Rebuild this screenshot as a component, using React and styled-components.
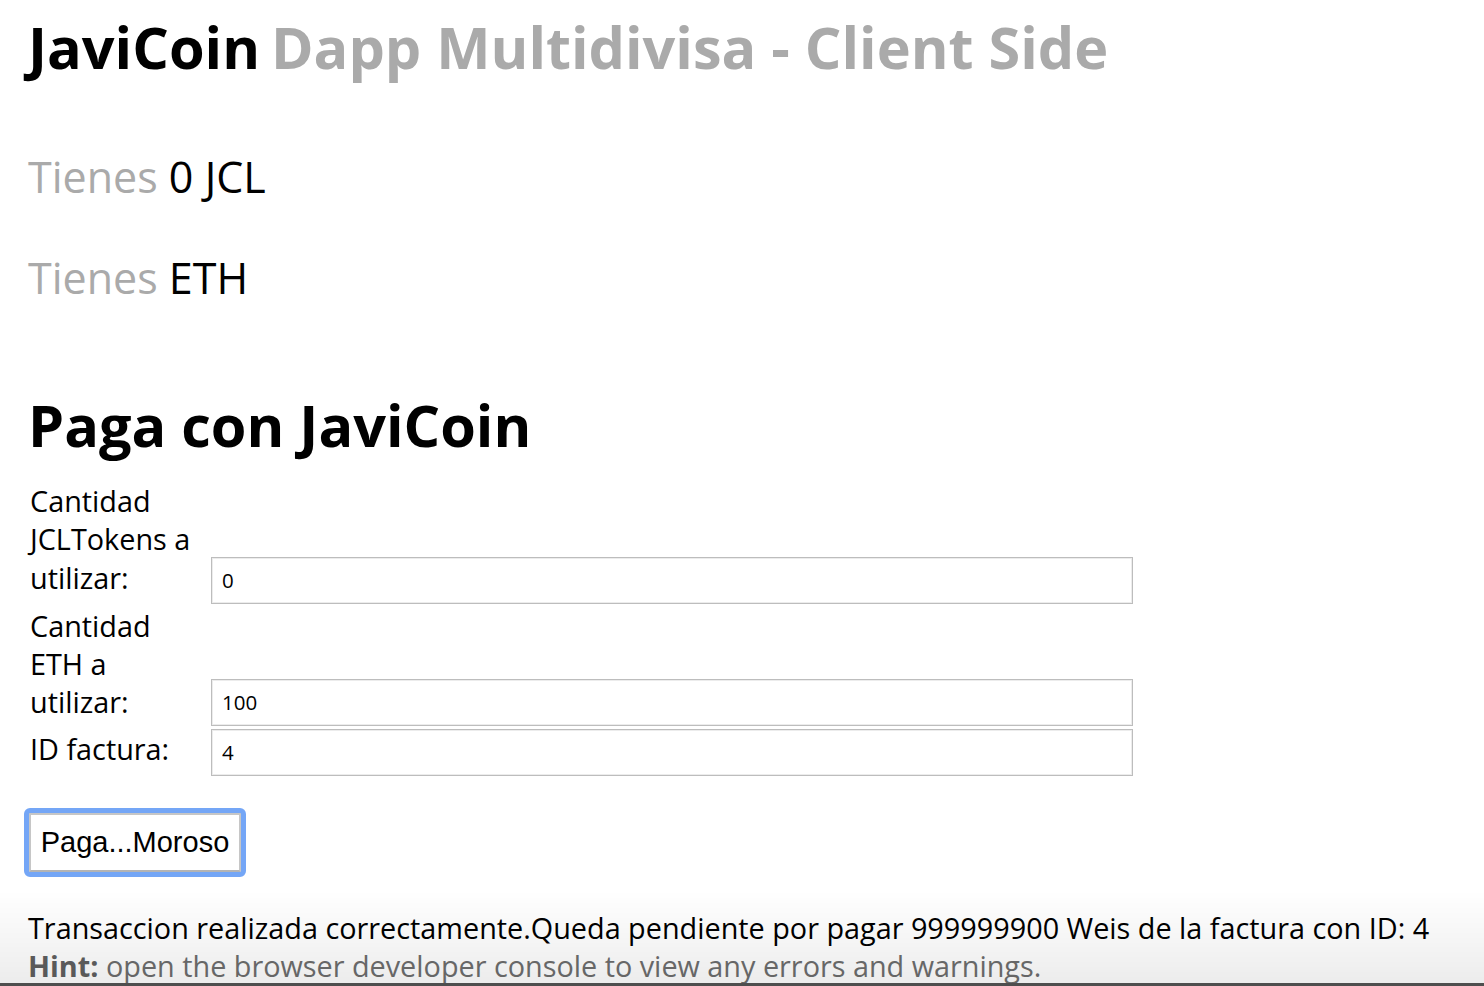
import React from "react";
import styled, { createGlobalStyle } from "styled-components";

const Global = createGlobalStyle`
  html, body { margin: 0; padding: 0; background: #fff; }
  body { font-family: "Open Sans", "DejaVu Sans", sans-serif; color: #000; }
`;

const Page = styled.main`
  display: flex;
  flex-direction: column;
  align-items: flex-start;
  padding: 9px 0 0 28px;
`;

const Title = styled.h1`
  margin: 0;
  font-size: 57.6px;
  line-height: 76px;
  font-weight: 700;
  white-space: nowrap;
`;

const Muted = styled.span`
  color: #aaaaaa;
`;

const TitleMuted = styled(Muted)`
  margin-left: 11px;
`;

const Balance = styled.h3`
  margin: ${(p) => p.$top}px 0 0 0;
  font-size: 43px;
  line-height: 58px;
  font-weight: 400;
`;

const Section = styled.h1`
  margin: 80px 0 0 0;
  font-size: 57.6px;
  line-height: 76px;
  font-weight: 700;
`;

const Form = styled.div`
  margin-top: 19px;
  display: grid;
  grid-template-columns: 172px 922px;
  column-gap: 11px;
  row-gap: 3px;
  align-items: end;
`;

const Label = styled.label`
  font-size: 28.8px;
  line-height: 38.3px;
  padding: 0 0 ${(p) => p.$bottom ?? 7}px 2px;
`;

const Input = styled.input`
  box-sizing: border-box;
  width: 922px;
  height: 47px;
  border: 1px solid #bdbdbd;
  box-shadow: inset 0 0 0 1px #ececec;
  padding: 0 10px;
  font-family: "Open Sans", sans-serif;
  font-size: 20.5px;
  color: #000;
  background: #fff;
  outline: none;
`;

const Button = styled.button`
  margin: 37px 0 0 1px;
  box-sizing: border-box;
  width: 212px;
  height: 59px;
  background: #fff;
  border: 2px solid #c6c6c6;
  border-bottom-color: #b4b4b4;
  border-radius: 1px;
  outline: 5px solid #74a6f6;
  outline-offset: 0;
  font-family: "Liberation Sans", Arial, sans-serif;
  font-size: 29px;
  color: #000;
  padding: 0;
`;

const Message = styled.p`
  margin: 37px 0 0 0;
  font-size: 28.8px;
  line-height: 38px;
  white-space: nowrap;
`;

const Hint = styled.p`
  margin: 0;
  font-size: 28.8px;
  line-height: 38px;
  color: #6e6e6e;
  white-space: nowrap;
`;

const HintStrong = styled.b`
  font-weight: 700;
  color: #606060;
`;

const Fade = styled.div`
  position: fixed;
  left: 0;
  right: 0;
  bottom: 0;
  height: 92px;
  pointer-events: none;
  background: linear-gradient(to bottom, rgba(0, 0, 0, 0) 0%, rgba(0, 0, 0, 0.07) 96%);
  border-bottom: 3px solid #4e4e4e;
`;

export default function App() {
  return (
    <>
      <Global />
      <Page>
        <Title>
          JaviCoin<TitleMuted>Dapp Multidivisa - Client Side</TitleMuted>
        </Title>
        <Balance $top={63}>
          <Muted>Tienes</Muted> 0 JCL
        </Balance>
        <Balance $top={43}>
          <Muted>Tienes</Muted> ETH
        </Balance>
        <Section>Paga con JaviCoin</Section>
        <Form>
          <Label>Cantidad JCLTokens a utilizar:</Label>
          <Input defaultValue="0" />
          <Label $bottom={4}>Cantidad ETH a utilizar:</Label>
          <Input defaultValue="100" />
          <Label>ID factura:</Label>
          <Input defaultValue="4" />
        </Form>
        <Button>Paga...Moroso</Button>
        <Message>
          Transaccion realizada correctamente.Queda pendiente por pagar 999999900 Weis de la factura con ID: 4
        </Message>
        <Hint>
          <HintStrong>Hint:</HintStrong> open the browser developer console to view any errors and warnings.
        </Hint>
      </Page>
      <Fade />
    </>
  );
}
